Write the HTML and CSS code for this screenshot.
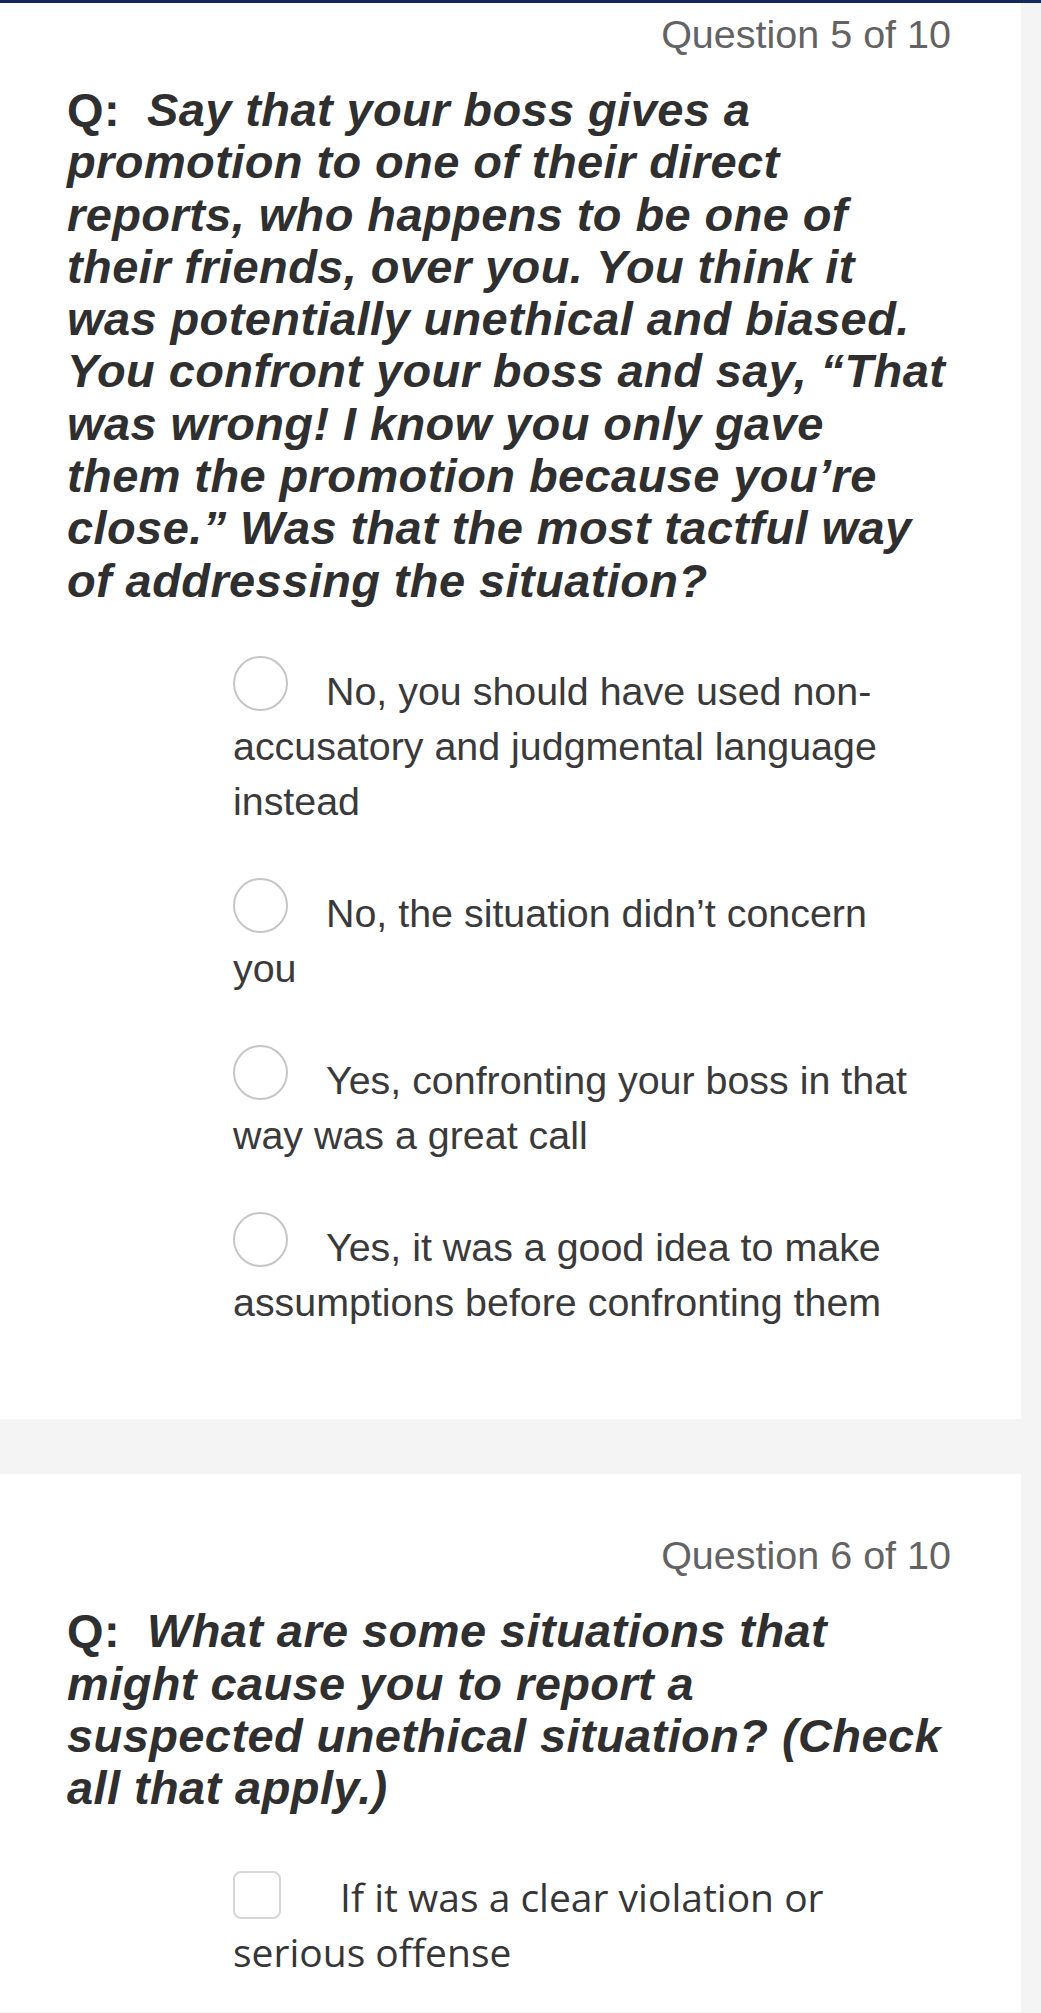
FILE: index.html
```html
<!DOCTYPE html>
<html lang="en">
<head>
<meta charset="utf-8">
<title>Quiz</title>
<link rel="stylesheet" href="styles.css">
</head>
<body>
<div class="topbar"></div>
<main class="page">
  <section class="card card-first">
    <div class="count">Question 5 of 10</div>
    <p class="question"><span class="q-label">Q:&nbsp; </span><em>Say that your boss gives a promotion to one of their direct reports, who happens to be one of their friends, over you. You think it was potentially unethical and biased. You confront your boss and say, “That was wrong! I know you only gave them the promotion because you’re close.” Was that the most tactful way of addressing the situation?</em></p>
    <ul class="options">
      <li class="option"><span class="radio"></span>No, you should have used non-accusatory and judgmental language instead</li>
      <li class="option"><span class="radio"></span>No, the situation didn’t concern you</li>
      <li class="option"><span class="radio"></span>Yes, confronting your boss in that way was a great call</li>
      <li class="option"><span class="radio"></span>Yes, it was a good idea to make assumptions before confronting them</li>
    </ul>
  </section>
  <section class="card card-second">
    <div class="count">Question 6 of 10</div>
    <p class="question"><span class="q-label">Q:&nbsp; </span><em>What are some situations that might cause you to report a<br>suspected unethical situation? (Check all that apply.)</em></p>
    <ul class="checks">
      <li class="check"><span class="checkbox"></span>If it was a clear violation or serious offense</li>
    </ul>
  </section>
</main>
</body>
</html>
```

FILE: styles.css
```css
html, body {
  margin: 0;
  padding: 0;
}

body {
  background: #f4f4f4;
  font-family: "Liberation Sans", Arial, sans-serif;
}

.topbar {
  height: 3px;
  background: #14285a;
}

.page {
  width: 1021px;
}

.card {
  background: #ffffff;
  padding: 9px 70px 89px 67px;
}

.card-second {
  margin-top: 55px;
  padding-top: 59.5px;
  padding-bottom: 33px;
}

.count {
  text-align: right;
  font-size: 39.5px;
  line-height: 44px;
  color: #636363;
}

.question {
  margin: 28px 0 0;
  font-size: 47px;
  line-height: 52.3px;
  font-weight: bold;
  letter-spacing: 0.4px;
  color: #2f2f2f;
}

.question em {
  font-style: italic;
}

.options,
.checks {
  list-style: none;
  margin: 57px 0 0;
  padding: 0 21px 0 166px;
  font-size: 39.4px;
  line-height: 55px;
  color: #3a3a3a;
}

.option + .option {
  margin-top: 57px;
}

.radio {
  display: inline-block;
  width: 55px;
  height: 55px;
  box-sizing: border-box;
  border: 2.5px solid #c6c6ca;
  border-radius: 50%;
  vertical-align: -6px;
  margin: -8px 38px 0 0;
}

.checks {
  margin-top: 54.6px;
  font-size: 39px;
  font-family: "Open Sans", "Liberation Sans", sans-serif;
  color: #363636;
}

.checkbox {
  display: inline-block;
  width: 48px;
  height: 48px;
  box-sizing: border-box;
  border: 2px solid #d6d6da;
  border-radius: 8px;
  vertical-align: -7px;
  margin-right: 59px;
}
```
